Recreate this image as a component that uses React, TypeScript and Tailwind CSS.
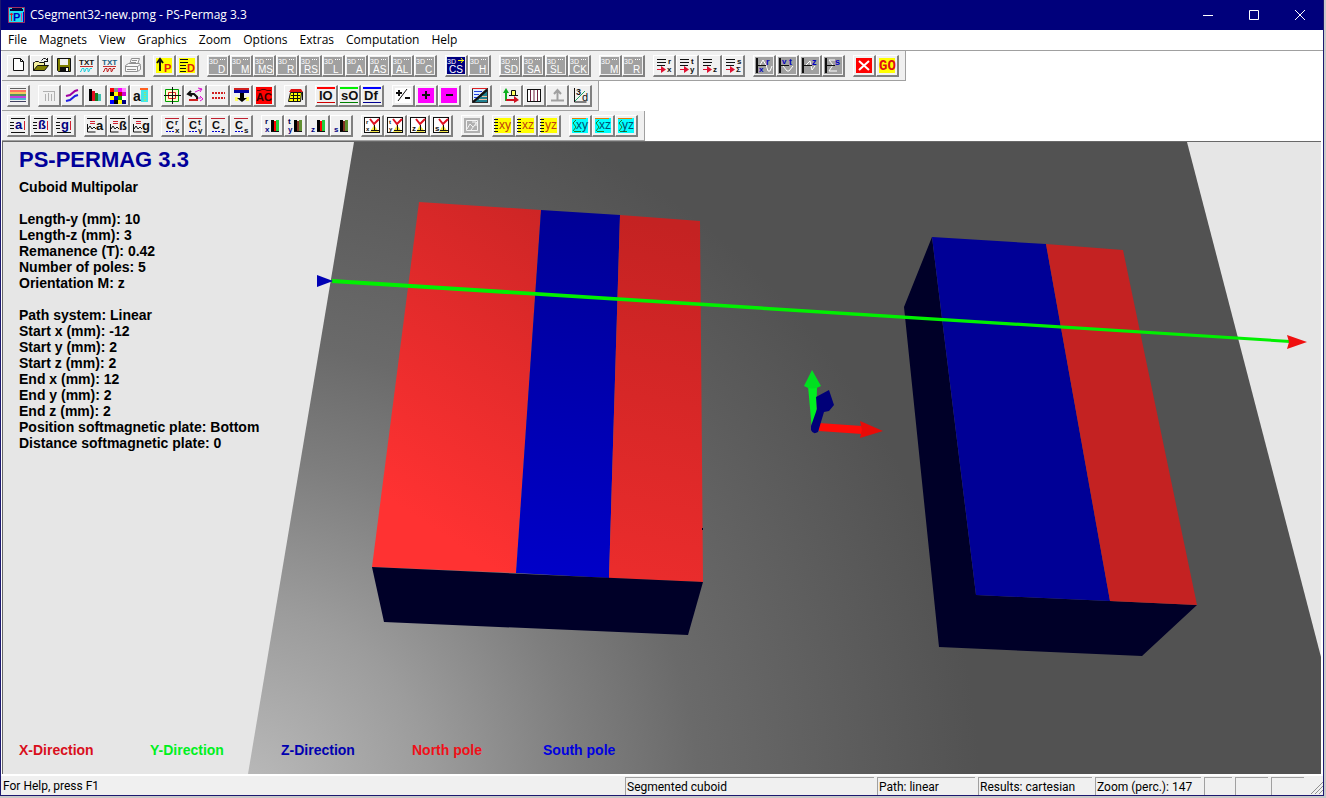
import type { ReactNode } from "react";

type Tool = { label: string; icon: ReactNode };

const DARK = "#101010";

function Glyph({
  x,
  y,
  size = 8,
  fill = DARK,
  bold = false,
  children,
}: {
  x: number;
  y: number;
  size?: number;
  fill?: string;
  bold?: boolean;
  children: ReactNode;
}) {
  if (!children) return null;
  return (
    <text
      x={x}
      y={y}
      fontSize={size}
      fill={fill}
      fontWeight={bold ? 700 : 400}
      fontFamily="'Liberation Sans', Arial, sans-serif"
    >
      {children}
    </text>
  );
}

function Line({ d, c = DARK, w = 1 }: { d: string; c?: string; w?: number }) {
  return <path d={d} stroke={c} strokeWidth={w} fill="none" />;
}

function Bg({ c }: { c: string }) {
  return <rect x="0" y="0" width="18" height="17" fill={c} />;
}

const threeD = (name: string): Tool => ({
  label: `3D ${name}`,
  icon: (
    <>
      <Bg c="#a0a0a0" />
      <Glyph x={0} y={7} size={7} fill="#fff">
        3D
      </Glyph>
      <Line d="M11 2.5h1M13 2.5h1M15 2.5h1" c="#fff" />
      <Glyph x={name.length > 1 ? 3 : 9} y={16} size={10} fill="#fff">
        {name}
      </Glyph>
    </>
  ),
});

const txt = (label: string, wave: string, letters: string): Tool => ({
  label,
  icon: (
    <>
      <Glyph x={1} y={8} size={8} fill={letters} bold>
        TXT
      </Glyph>
      <Line d="M2 9.5h13" c="#c03030" />
      <Line d="M2 14.5h1l1-3h2v3h1l1-3h2v3h1l1-3h2" c={wave} />
    </>
  ),
});

const listTo = (a: string, b: string): Tool => ({
  label: `List ${a} ${b}`,
  icon: (
    <>
      <Line d="M2 2.5h9M2 5.5h9M2 8.5h8" />
      <Line d="M2 12.5h8" c="#e01030" />
      <path d="M6 9l5 3.5L6 16z" fill="#e01030" />
      <Glyph x={13} y={7} bold>
        {a}
      </Glyph>
      <Glyph x={12} y={15} bold>
        {b}
      </Glyph>
    </>
  ),
});

const curve = (a: string, b: string, d: string): Tool => ({
  label: `Curve ${a} ${b}`,
  icon: (
    <>
      <Bg c="#a0a0a0" />
      <Line d={d} c="#fff" />
      <Line d="M2 1v15" w={2} />
      <Line d="M1 8.5h10" />
      <Glyph x={11} y={8} size={9} fill="#0000c0" bold>
        {a}
      </Glyph>
      <Glyph x={4} y={b === "v" ? 7 : 15} fill="#0000c0" bold>
        {b}
      </Glyph>
    </>
  ),
});

const banded = (name: string, top: string, bottom: string): Tool => ({
  label: name,
  icon: (
    <>
      <Line d="M0 1h18" c={top} w={2} />
      <Glyph x={name === "IO" ? 2 : 1} y={13} size={13} bold>
        {name}
      </Glyph>
      <Line d="M0 15.5h18" c={bottom} />
    </>
  ),
});

const component = (name: string): Tool => ({
  label: `Component ${name}`,
  icon: (
    <>
      <Line d="M2 1.5h14M2 15.5h14" />
      <Line d="M1 5.5h4M1 8.5h4M1 11.5h4" />
      <Glyph x={6} y={12} size={13} fill="#000080" bold>
        {name}
      </Glyph>
      <Line d="M15.5 4v9" c="#d02030" />
    </>
  ),
});

const graphOf = (name: string): Tool => ({
  label: `Graph ${name}`,
  icon: (
    <>
      <Line d="M1 1.5h15" />
      <Line d="M4 4.5h5M4 6.5h5" c="#d02030" />
      <Line d="M1.5 7v8h8M2 12l2-3 2 3 2-2 2 2" />
      <Glyph x={10} y={13} size={13} bold>
        {name}
      </Glyph>
    </>
  ),
});

const coord = (a: string, b: string): Tool => ({
  label: `Coordinate ${a} ${b}`,
  icon: (
    <>
      <Line d="M2 1.5h14" c="#c02030" />
      <Glyph x={3} y={12} size={11} bold>
        C
      </Glyph>
      <path d="M3 14.5h8" stroke="#0000d0" strokeDasharray="2 1" />
      <Glyph x={12} y={8} bold>
        {a}
      </Glyph>
      <Glyph x={12} y={16} bold>
        {b}
      </Glyph>
    </>
  ),
});

const bars = (a: string, b: string, mid: string, end: string): Tool => ({
  label: `Bars ${a} ${b}`,
  icon: (
    <>
      <Glyph x={2} y={7} fill="#000050" bold>
        {a}
      </Glyph>
      <Glyph x={2} y={15} fill="#000080" bold>
        {b}
      </Glyph>
      <path d="M8 3h3v12H8z" fill="#000" />
      <path d="M11 4h2v10h-2z" fill={mid} />
      <path d="M13 3h3v11h-3z" fill={end} />
      <Line d="M8 14.5h8" />
    </>
  ),
});

const boxed = (a: string, b: string): Tool => ({
  label: `Plot ${a} ${b}`,
  icon: (
    <>
      <rect x="1.5" y="0.5" width="15" height="15" fill="#fff" stroke={DARK} />
      <path d="M11 8l5 7H7z" fill="#f5e642" />
      <Line d="M11.5 8v6M8 13.5h8" />
      <Line d="M7 2l4 5 5-5" c="#e01020" w={2} />
      <Glyph x={3} y={7} size={6} bold>
        {a}
      </Glyph>
      <Glyph x={3} y={14} size={b === "x" || b === "y" ? 6 : 8} bold>
        {b}
      </Glyph>
    </>
  ),
});

const plane = (name: string, bg: string, ink: string): Tool => ({
  label: `Plane ${name}`,
  icon: (
    <>
      <path d="M1 1h16v15H1z" fill={bg} />
      {bg === "#ffff00" ? (
        <Line d="M0 2.5h4M0 5.5h4M0 8.5h4M0 11.5h4M0 14.5h4" />
      ) : (
        <>
          <Line d="M1 1.5h14" c="#e08000" />
          <Line d="M5 3L2 6l3 4-3 4M3 14.5h7" c="#208020" />
        </>
      )}
      <Glyph x={5} y={12} size={12} fill={ink}>
        {name}
      </Glyph>
    </>
  ),
});

const fileTools: Tool[] = [
  {
    label: "New",
    icon: (
      <path
        d="M4.5 1.5h7l3 3v9h-10zM11.5 1.5v3h3"
        fill="#fff"
        stroke={DARK}
      />
    ),
  },
  {
    label: "Open",
    icon: (
      <>
        <path d="M1.5 13.5v-8h1l1-1h3l1 1h5v3" fill="#f4f0a0" stroke={DARK} />
        <path d="M1.5 13.5l4-5h11l-4 5z" fill="#808000" stroke={DARK} />
        <Line d="M9.5 3.5l2-2h2l2 2M15.5 1v4M12 4.5h4" />
      </>
    ),
  },
  {
    label: "Save",
    icon: (
      <>
        <path d="M2.5 1.5h13v13h-12l-1-1z" fill="#808000" stroke={DARK} />
        <path d="M5 2h8v6H5z" fill="#f0f0f0" />
        <path d="M5 10h9v5H5z" fill={DARK} />
        <path d="M11 11h2v3h-2z" fill="#fff" />
      </>
    ),
  },
  txt("Export text", "#20d0e0", DARK),
  txt("Import text", "#c02020", "#206080"),
  {
    label: "Print",
    icon: (
      <g fill="#f8f8f8" stroke="#909090">
        <path d="M5.5 7.5l2-6h8l-2 6z" />
        <path d="M1.5 8.5l3-2h11l1 2v4l-3 2h-12z" />
        <path d="M1.5 9.5h12l3-2M3 12.5h9M13.5 9v5M8 3.5h5M7 5.5h5" />
      </g>
    ),
  },
];

const threeDLinked: Tool = {
  label: "3D CS",
  icon: (
    <>
      <Bg c="#000080" />
      <Glyph x={0} y={7} size={7} fill="#fff">
        3D
      </Glyph>
      <Line d="M11 3.5h6M14 1l2 2.5L14 6" c="#ffff00" />
      <Glyph x={2} y={16} size={10} fill="#fff">
        CS
      </Glyph>
    </>
  ),
};

const runTools: Tool[] = [
  {
    label: "Stop",
    icon: (
      <>
        <path d="M1 1h16v15H1z" fill="#ff0000" />
        <Line d="M4 4l10 9M14 4L4 13" c="#fff" w={2} />
      </>
    ),
  },
  {
    label: "Go",
    icon: (
      <>
        <path d="M1 1h16v15H1z" fill="#ffff00" />
        <text
          x="1"
          y="13"
          fontSize="14"
          fontWeight="700"
          fill="#e01010"
          fontFamily="'Liberation Mono', monospace"
        >
          GO
        </text>
      </>
    ),
  },
];

const parameterTools: Tool[] = [
  {
    label: "Path",
    icon: (
      <>
        <path d="M1 1h16v15H1z" fill="#ffff00" />
        <Line d="M5 3v11" w={2} />
        <Line d="M2 6l3-4 3 4" w={2} />
        <Glyph x={9} y={15} size={11} fill="#e02010" bold>
          P
        </Glyph>
      </>
    ),
  },
  {
    label: "Data",
    icon: (
      <>
        <path d="M1 1h16v15H1z" fill="#ffff00" />
        <Line d="M2 2.5h8M2 5.5h8M2 8.5h6M2 11.5h6M2 14.5h6" />
        <Glyph x={9} y={15} size={11} fill="#e02010" bold>
          D
        </Glyph>
      </>
    ),
  },
];

const mosaic = [
  "#ff0000",
  "#909090",
  "#ff00ff",
  "#ff80ff",
  "#000000",
  "#ffff00",
  "#c00000",
  "#d000d0",
  "#ffff00",
  "#0000c0",
  "#00a000",
  "#ffffff",
  "#0000ff",
  "#000000",
  "#ffff00",
  "#000080",
];

const viewTools: Tool[] = [
  {
    label: "Bar chart",
    icon: <Line d="M3 4.5h12M5.5 7v7M8.5 6v8M11.5 7v7M14.5 5v9" c="#b0b0b0" />,
  },
  {
    label: "Line chart",
    icon: (
      <>
        <Line d="M3 9l4-1 5-4 3-1" c="#a000a0" w={2} />
        <Line d="M3 14l4-1 5-4 3-1" c="#2020e0" w={2} />
      </>
    ),
  },
  {
    label: "Columns",
    icon: (
      <>
        <path d="M3 2h3v12H3z" fill="#000" />
        <path d="M6 4h3v10H6z" fill="#e01020" />
        <path d="M9 6h3v8H9z" fill="#108020" />
        <path d="M12 7h3v7h-3z" fill="#40c0b0" />
      </>
    ),
  },
  {
    label: "Colour map",
    icon: mosaic.map((c, i) => (
      <rect
        key={i}
        x={1 + (i % 4) * 4}
        y={1 + Math.floor(i / 4) * 4}
        width="4"
        height="4"
        fill={c}
      />
    )),
  },
  {
    label: "Area",
    icon: (
      <>
        <path d="M9 3h7v12H9z" fill="#40e8e8" />
        <Line d="M8 2h8" c="#ff6020" w={2} />
        <path d="M13 5v9" stroke="#f0e000" strokeDasharray="1 1" />
        <Glyph x={1} y={14} size={14} bold>
          a
        </Glyph>
      </>
    ),
  },
];

const fieldTools: Tool[] = [
  {
    label: "Centre",
    icon: (
      <>
        <path d="M2.5 2.5h13v12h-13z" fill="#fffbd0" stroke="#00a000" />
        <path d="M5.5 5.5h7v6h-7z" fill="none" stroke="#e02020" />
        <Line d="M9.5 0v17M1 8.5h17" />
      </>
    ),
  },
  {
    label: "Rotate",
    icon: (
      <>
        <Line d="M5 4L2 7l4 2M3 7h5l3 3v3" w={2} />
        <Line d="M9 5l7-3M12 1l4 1-2 3" c="#e010d0" />
        <Line d="M12 11h3M14 9l3 3-3 2" c="#e010d0" />
        <Line d="M3 13h9" c="#d02020" w={2} />
      </>
    ),
  },
  {
    label: "Dashes",
    icon: (
      <path
        d="M3 6h13M3 11h13"
        stroke="#d02020"
        strokeWidth="2"
        strokeDasharray="2 1"
      />
    ),
  },
  {
    label: "Press down",
    icon: (
      <>
        <path d="M2 1h15v2H2z" fill="#d02020" />
        <path d="M2 3h15v3H2z" fill="#0000a0" />
        <path d="M3 10h3v4H3zM14 10h3v4h-3z" fill="#ffff60" />
        <path d="M8 6h4v5h3l-5 4-5-4h3z" fill="#000" />
      </>
    ),
  },
  {
    label: "AC",
    icon: (
      <>
        <path d="M1 0h16v17H1z" fill="#ff0000" />
        <Line d="M2 3.5h3l2-1h3l2 1h4" c="#600000" />
        <Glyph x={1} y={14} size={11} fill="#300000" bold>
          AC
        </Glyph>
      </>
    ),
  },
];

const signTools: Tool[] = [
  {
    label: "Toggle sign",
    icon: (
      <>
        <path d="M1 1h16v15H1z" fill="#fff" />
        <Line d="M2 6h6M5 3v6M11 11h5" w={2} />
        <Line d="M4 14l9-12" />
      </>
    ),
  },
  {
    label: "Plus",
    icon: (
      <>
        <path d="M1 1h16v15H1z" fill="#ff00ff" />
        <Line d="M5 8h8M9 4v8" w={2} />
      </>
    ),
  },
  {
    label: "Minus",
    icon: (
      <>
        <path d="M1 1h16v15H1z" fill="#ff00ff" />
        <Line d="M6 8h7" w={2} />
      </>
    ),
  },
];

const axisTools: Tool[] = [
  {
    label: "Axes",
    icon: (
      <>
        <Line d="M4 4v10" c="#10b020" w={2} />
        <path d="M1 6l3-5 3 5z" fill="#10b020" />
        <Line d="M4 13h9" c="#d01020" w={2} />
        <path d="M12 9l5 4-5 3z" fill="#d01020" />
        <path d="M9.5 8.5v-5h4v5M7 8.5h9" fill="#ffff60" stroke={DARK} />
      </>
    ),
  },
  {
    label: "Columns frame",
    icon: (
      <>
        <rect x="2.5" y="2.5" width="13" height="12" fill="#fff" stroke={DARK} />
        <Line d="M5.5 3v11M9 3v11M12.5 3v11" c="#702040" />
      </>
    ),
  },
  {
    label: "Perpendicular",
    icon: <Line d="M9.5 3v10M3 13.5h13M6 7l3.5-4L13 7" c="#a0a0a0" w={2} />,
  },
  {
    label: "3D axes",
    icon: (
      <>
        <Line d="M3.5 1v14h12" />
        <Line d="M4 14L14 4" c="#20a060" />
        <Glyph x={5} y={8} size={9} bold>
          3
        </Glyph>
        <Glyph x={11} y={14} size={11}>
          d
        </Glyph>
      </>
    ),
  },
];

const toolbars: Tool[][][] = [
  [
    fileTools,
    parameterTools,
    ["D", "M", "MS", "R", "RS", "L", "A", "AS", "AL", "C"].map(threeD),
    [threeDLinked, threeD("H")],
    ["SD", "SA", "SL", "CK"].map(threeD),
    ["M", "R"].map(threeD),
    [listTo("r", "x"), listTo("t", "y"), listTo("", "z"), listTo("s", "Σ")],
    [
      curve("r", "x", "M5 8l3-5 3 5 2 6h2l2-5"),
      curve("t", "v", "M5 9l4 5h2l4-5"),
      curve("z", "", "M5 8l4-4 2 9 3-4"),
      curve("s", "", "M11 3H5l4 5-4 6h8"),
    ],
    runTools,
  ],
  [
    [
      {
        label: "Layers",
        icon: (
          <>
            <Line d="M1 1.5h16" c="#606060" />
            <Line d="M1 4h16" c="#ff7060" w={2} />
            <Line d="M1 6h16" c="#f0c860" w={2} />
            <Line d="M1 8h16" c="#509060" w={2} />
            <Line d="M1 10h16" c="#c040e0" w={2} />
            <Line d="M1 12h16" c="#50b0d0" w={2} />
            <Line d="M1 14.5h16" c="#404060" />
          </>
        ),
      },
    ],
    viewTools,
    fieldTools,
    [
      {
        label: "Table",
        icon: (
          <>
            <path d="M5 2h10l2 3H3z" fill="#e01010" />
            <path d="M4.5 5.5h11l-1 9h-12z" fill="#ffff00" stroke={DARK} />
            <Line d="M16.5 5v8M5 8.5h9M4 11.5h10M7.5 6v8M11.5 6v8" />
          </>
        ),
      },
    ],
    [
      banded("IO", "#ff0000", "#d00000"),
      banded("sO", "#00f000", "#008000"),
      banded("Df", "#0000ff", "#000090"),
    ],
    signTools,
    [
      {
        label: "Split view",
        icon: (
          <>
            <path d="M1 1h16v15H1z" fill="#303030" />
            <path d="M2 2h13L2 14z" fill="#e0ecff" />
            <path d="M16 4v11H4z" fill="#208090" />
            <Line d="M3 4.5h8M3 7.5h5M3 10.5h3" c="#2040e0" />
            <Line d="M11 9.5h5M8 12.5h8" c="#f0c0a0" />
            <Line d="M1 1.5h15" c="#e02020" />
            <Line d="M2 15L16 3" w={2} />
          </>
        ),
      },
    ],
    axisTools,
  ],
  [
    [component("a"), component("ß"), component("g")],
    [graphOf("a"), graphOf("ß"), graphOf("g")],
    [coord("r", "x"), coord("t", "y"), coord("", "z"), coord("", "s")],
    [
      bars("r", "x", "#ff0000", "#20d040"),
      bars("t", "y", "#803020", "#609030"),
      bars("", "z", "#ff0000", "#20d040"),
      bars("", "s", "#803020", "#609030"),
    ],
    [boxed("r", "x"), boxed("t", "y"), boxed("", "z"), boxed("", "s")],
    [
      {
        label: "Plot off",
        icon: (
          <>
            <path d="M1 1h16v15H1z" fill="#b0b0b0" />
            <Line d="M3.5 3.5h11v10h-11zM4 12l3-5 3 3M9 5h4v4M8 13l6-8" c="#f4f4f4" />
          </>
        ),
      },
    ],
    ["xy", "xz", "yz"].map((p) => plane(p, "#ffff00", "#c04010")),
    ["xy", "xz", "yz"].map((p) => plane(p, "#00ffff", "#005070")),
  ],
];

const menus = [
  "File",
  "Magnets",
  "View",
  "Graphics",
  "Zoom",
  "Options",
  "Extras",
  "Computation",
  "Help",
];

const parameters = [
  "Cuboid Multipolar",
  "",
  "Length-y (mm): 10",
  "Length-z (mm): 3",
  "Remanence (T): 0.42",
  "Number of poles: 5",
  "Orientation M: z",
  "",
  "Path system: Linear",
  "Start x (mm): -12",
  "Start y (mm): 2",
  "Start z (mm): 2",
  "End x (mm): 12",
  "End y (mm): 2",
  "End z (mm): 2",
  "Position softmagnetic plate: Bottom",
  "Distance softmagnetic plate: 0",
];

const legend = [
  { text: "X-Direction", color: "text-[#d90f1c]" },
  { text: "Y-Direction", color: "text-[#00f01e]" },
  { text: "Z-Direction", color: "text-[#0000b0]" },
  { text: "North pole", color: "text-[#f01018]" },
  { text: "South pole", color: "text-[#0000e0]" },
];

function ToolButton({ label, icon }: Tool) {
  return (
    <button
      type="button"
      aria-label={label}
      className="flex h-[22px] w-[23px] items-center justify-center border-t border-r-2 border-b-2 border-l border-t-white border-r-[#808080] border-b-[#808080] border-l-white bg-[#f0f0f0]"
    >
      <svg width="18" height="17" viewBox="0 0 18 17" aria-hidden="true">
        {icon}
      </svg>
    </button>
  );
}

function Toolbar({ groups }: { groups: Tool[][] }) {
  return (
    <div className="flex h-[30px] w-fit items-center gap-2 border-r border-b border-[#a0a0a0] bg-[#f0f0f0] pr-[6px] pl-[5px]">
      {groups.map((group, i) => (
        <div key={i} className="flex">
          {group.map((tool, j) => (
            <ToolButton key={j} {...tool} />
          ))}
        </div>
      ))}
    </div>
  );
}

function WindowButton({ label, d }: { label: string; d: string }) {
  return (
    <button
      type="button"
      aria-label={label}
      className="flex h-[30px] w-[46px] items-center justify-center"
    >
      <svg width="12" height="12" viewBox="0 0 12 12" aria-hidden="true">
        <Line d={d} c="#fff" />
      </svg>
    </button>
  );
}

function TitleBar() {
  return (
    <header className="flex h-[30px] items-center bg-[#00007b] pl-[7px] text-white">
      <svg width="17" height="16" viewBox="0 0 17 16" aria-hidden="true">
        <path d="M.5 .5h16v15H.5z" fill="#20e0f0" stroke="#a03060" />
        <path d="M2 3h13M4 2h10" stroke="#000040" strokeWidth="2" />
        <path d="M3.5 6v8M2 8l1.5-2L5 8" stroke="#e02020" fill="none" />
        <path d="M13 6h1v8h-1z" fill="#e040a0" />
        <path d="M15 5h1v10h-1z" fill="#0000c0" />
        <Glyph x={5} y={14} size={11} fill="#0000c0" bold>
          P
        </Glyph>
      </svg>
      <h1 className="ml-[5px] flex-1 text-[12px]">
        CSegment32-new.pmg - PS-Permag 3.3
      </h1>
      <div className="flex">
        <WindowButton label="Minimize" d="M1 6.5h10" />
        <WindowButton label="Maximize" d="M1.5 1.5h9v9h-9z" />
        <WindowButton label="Close" d="M1 1l10 10M11 1L1 11" />
      </div>
    </header>
  );
}

function Scene() {
  return (
    <svg
      className="absolute inset-0 h-full w-full"
      viewBox="3 142 1318 632"
      preserveAspectRatio="xMidYMid slice"
      role="img"
      aria-label="Magnet model with linear path"
    >
      <defs>
        <radialGradient id="plate" gradientUnits="userSpaceOnUse" cx="240" cy="800" r="740">
          <stop offset="0" stopColor="#bcbcbc" />
          <stop offset="0.26" stopColor="#9c9c9c" />
          <stop offset="0.46" stopColor="#7e7e7e" />
          <stop offset="0.62" stopColor="#6a6a6a" />
          <stop offset="1" stopColor="#525252" />
        </radialGradient>
        <linearGradient id="north" gradientUnits="userSpaceOnUse" x1="620" y1="220" x2="420" y2="520">
          <stop offset="0" stopColor="#c82424" />
          <stop offset="1" stopColor="#ff3232" />
        </linearGradient>
        <linearGradient id="northFar" gradientUnits="userSpaceOnUse" x1="690" y1="230" x2="620" y2="570">
          <stop offset="0" stopColor="#c42222" />
          <stop offset="1" stopColor="#ea2c2c" />
        </linearGradient>
        <linearGradient id="south" gradientUnits="userSpaceOnUse" x1="600" y1="215" x2="550" y2="575">
          <stop offset="0" stopColor="#000096" />
          <stop offset="1" stopColor="#0000c8" />
        </linearGradient>
      </defs>
      <path d="M354 142H1187L1321 657V774H248z" fill="url(#plate)" />

      <path d="M419 202L541 210L516 573L372 567z" fill="url(#north)" />
      <path d="M541 210L620 215L609 578L516 573z" fill="url(#south)" />
      <path d="M620 215L700 221L703 582L609 578z" fill="url(#northFar)" />
      <path d="M372 567L703 582L688 635L384 622z" fill="#000028" />
      <path d="M702 529h1" stroke="#000028" strokeWidth="2" />

      <path d="M932 237L904 307L939 647L1142 656L1197 605L976 595z" fill="#000028" />
      <path d="M932 237L1046 244L1110 601L976 595z" fill="#000096" />
      <path d="M1046 244L1123 250L1197 605L1110 601z" fill="#c42222" />

      <path d="M332 279L1290 340V343L332 283z" fill="#00f000" />
      <path d="M317 275L333 281L317 287z" fill="#0000b4" />
      <path d="M1287 335L1307 342L1287 349L1289 342z" fill="#f01010" />

      <path d="M808 386H817L816 430H812z" fill="#00f020" />
      <path d="M812 370L821 386Q812 391 804 386z" fill="#00e020" />
      <path d="M819 423L862 426V434L819 431z" fill="#ff0c08" />
      <path d="M860 421L883 431L860 438L862 430z" fill="#e80c08" />
      <path d="M811 426L817 409L816 397L829 390L834 405L829 411L824 412L818 432Q813 435 811 430z" fill="#000078" />
    </svg>
  );
}

function StatusCell({ className, children }: { className: string; children?: ReactNode }) {
  return (
    <div
      className={`h-[18px] shrink-0 border-t border-l border-[#a0a0a0] pl-px leading-[18px] whitespace-nowrap ${className}`}
    >
      {children}
    </div>
  );
}

function StatusBar() {
  return (
    <footer className="flex h-[21px] items-center border-t-2 border-white bg-[#f0f0f0] font-['Roboto',sans-serif] text-[12px]">
      <p className="flex-1 pl-0.5 leading-5">For Help, press F1</p>
      <div className="flex gap-[3px]">
        <StatusCell className="w-[249px]">Segmented cuboid</StatusCell>
        <StatusCell className="w-[98px]">Path: linear</StatusCell>
        <StatusCell className="w-[114px]">Results: cartesian</StatusCell>
        <StatusCell className="w-[106px]">Zoom (perc.): 147</StatusCell>
        <StatusCell className="w-[28px]" />
        <StatusCell className="w-[33px]" />
        <StatusCell className="w-[33px]" />
      </div>
      <svg className="ml-[5px]" width="14" height="16" viewBox="0 0 14 16" aria-hidden="true">
        <Line d="M2 16L14 4M6 16L14 8M10 16L14 12" c="#909090" />
      </svg>
    </footer>
  );
}

export default function App() {
  return (
    <div className="h-screen bg-[#c8c8c8] pr-[2px] pb-[2px] font-['Open_Sans','Noto_Sans',sans-serif] text-black">
      <div className="flex h-full flex-col border border-t-0 border-[#1c1870] bg-white">
        <TitleBar />
        <nav className="flex h-[21px] items-center border-b border-[#a0a0a0] pl-px text-[12px]">
          {menus.map((menu) => (
            <button key={menu} type="button" className="px-[6px]">
              {menu}
            </button>
          ))}
        </nav>
        <div className="pl-px">
          {toolbars.map((groups, i) => (
            <Toolbar key={i} groups={groups} />
          ))}
        </div>
        <main className="relative mr-[2px] ml-px flex flex-1 flex-col justify-between border-t border-l border-[#696969] bg-[#e6e6e6] font-['Liberation_Sans',Arial,sans-serif]">
          <Scene />
          <section className="relative pt-[6px] pl-4">
            <h2 className="text-[22px] leading-6 font-bold text-[#00009a]">PS-PERMAG 3.3</h2>
            <div className="mt-[7px] text-[14px] leading-4 font-bold">
              {parameters.map((row, i) => (
                <p key={i} className="h-4">
                  {row}
                </p>
              ))}
            </div>
          </section>
          <ul className="relative flex pb-[14px] pl-4 text-[14px] leading-5 font-bold">
            {legend.map(({ text, color }) => (
              <li key={text} className={`w-[131px] ${color}`}>
                {text}
              </li>
            ))}
          </ul>
        </main>
        <StatusBar />
      </div>
    </div>
  );
}
